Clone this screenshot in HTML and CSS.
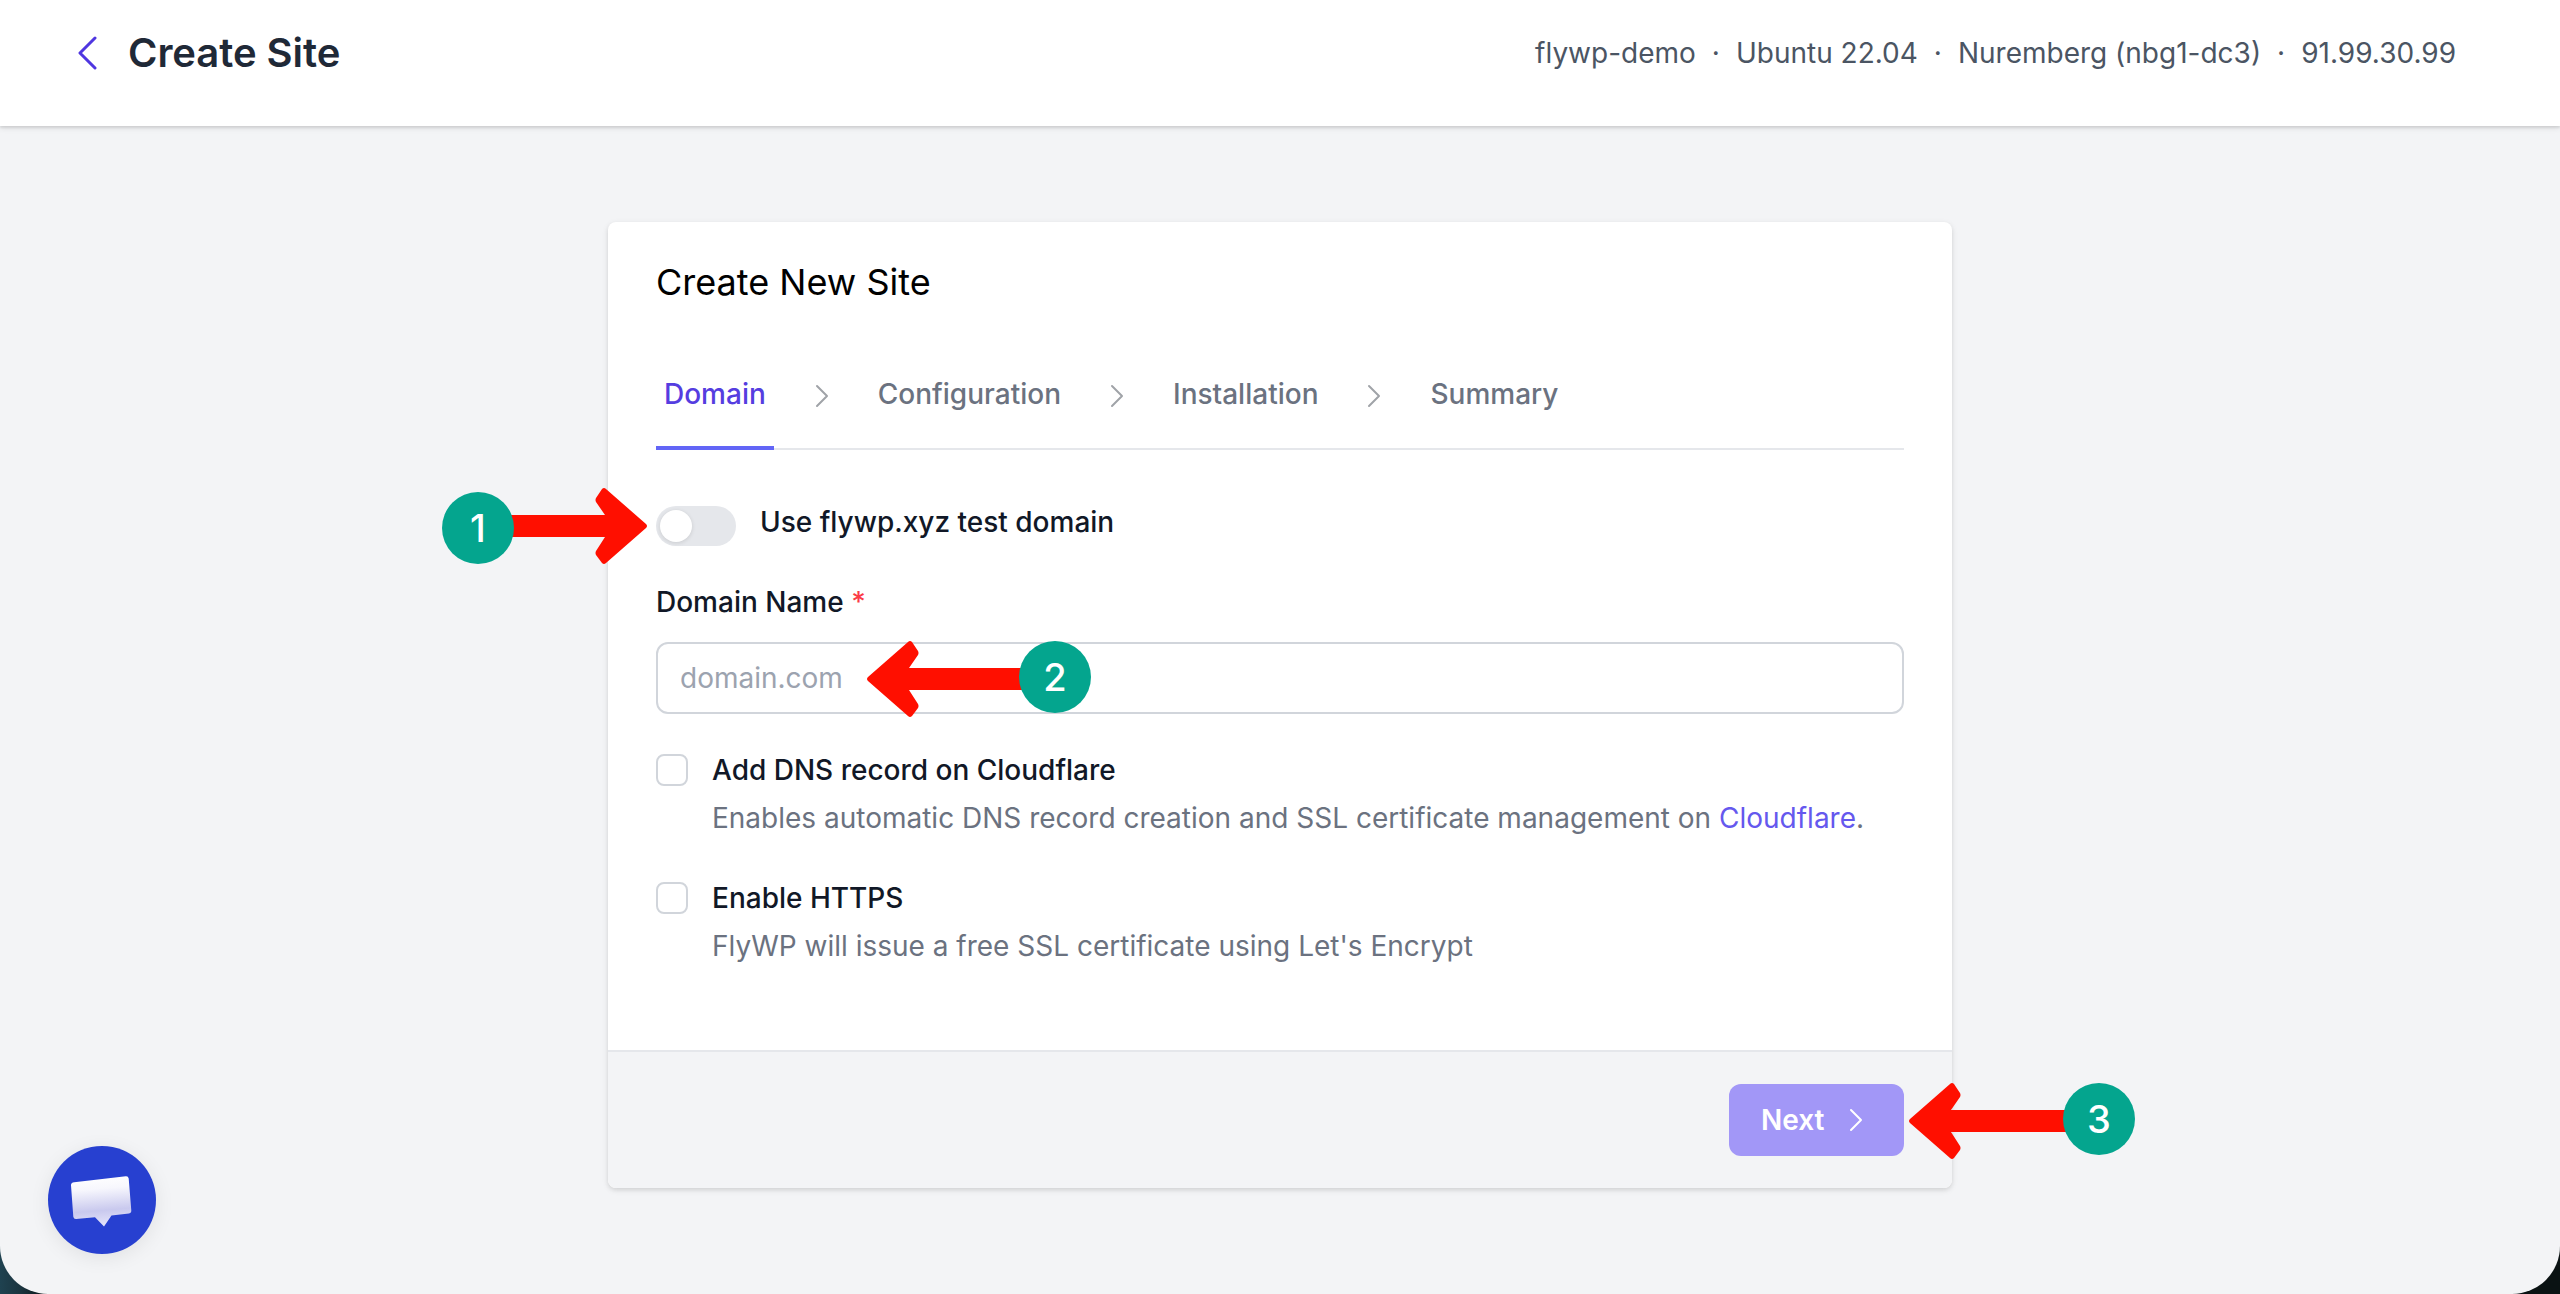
FILE: index.html
```html
<!DOCTYPE html>
<html lang="en">
<head>
<meta charset="utf-8">
<title>Create Site</title>
<link rel="stylesheet" href="styles.css">
</head>
<body>
<div class="window">
  <header class="header">
    <div class="header-left">
      <svg class="back" viewBox="0 0 20 34" width="20" height="34"><path d="M17 2 2 17l15 15"/></svg>
      <h1 class="page-title">Create Site</h1>
    </div>
    <div class="server-meta"><span>flywp-demo</span><span class="dot">·</span><span>Ubuntu 22.04</span><span class="dot">·</span><span>Nuremberg (nbg1-dc3)</span><span class="dot">·</span><span>91.99.30.99</span></div>
  </header>

  <main class="card">
    <div class="card-body">
      <h2 class="card-title">Create New Site</h2>
      <nav class="tabs">
        <span class="tab tab-active">Domain</span>
        <svg class="chevron" viewBox="0 0 14 24" width="14" height="24"><path d="M2 2l10 10L2 22"/></svg>
        <span class="tab">Configuration</span>
        <svg class="chevron" viewBox="0 0 14 24" width="14" height="24"><path d="M2 2l10 10L2 22"/></svg>
        <span class="tab">Installation</span>
        <svg class="chevron" viewBox="0 0 14 24" width="14" height="24"><path d="M2 2l10 10L2 22"/></svg>
        <span class="tab">Summary</span>
      </nav>
      <div class="toggle-row">
        <div class="toggle"><div class="knob"></div></div>
        <span class="label">Use flywp.xyz test domain</span>
      </div>
      <div class="field-label">Domain Name <span class="required">*</span></div>
      <div class="input">domain.com</div>
      <div class="check-row">
        <div class="checkbox"></div>
        <div class="check-text">
          <div class="label">Add DNS record on Cloudflare</div>
          <div class="desc">Enables automatic DNS record creation and SSL certificate management on <a class="link">Cloudflare</a>.</div>
        </div>
      </div>
      <div class="check-row check-row-next">
        <div class="checkbox"></div>
        <div class="check-text">
          <div class="label">Enable HTTPS</div>
          <div class="desc">FlyWP will issue a free SSL certificate using Let's Encrypt</div>
        </div>
      </div>
    </div>
    <footer class="card-footer">
      <div class="button">Next<svg class="chevron-light" viewBox="0 0 14 24" width="14" height="24"><path d="M2 2l10 10L2 22"/></svg></div>
    </footer>
  </main>

  <div class="chat">
    <svg viewBox="0 0 108 108" width="108" height="108">
      <defs>
        <linearGradient id="bubble" x1="0.45" y1="0" x2="0.55" y2="1">
          <stop offset="0" stop-color="#ffffff"/>
          <stop offset="0.25" stop-color="#f7f7fd"/>
          <stop offset="0.68" stop-color="#c9c9ee"/>
          <stop offset="1" stop-color="#e6e6fb"/>
        </linearGradient>
      </defs>
      <path d="M26.200 36.300 77.800 30.200Q80.300 30 80.700 32.500L83.300 64.500Q83.500 67 81 67.400L63.500 69.500 56 80.500 47 71.200 28.200 73Q25.700 73.200 25.300 70.700L23 39.200Q22.900 36.700 26.200 36.300Z" fill="url(#bubble)"/>
    </svg>
  </div>
</div>

<svg class="arrow arrow-1" viewBox="0 0 146 78" width="146" height="78"><path d="M10 28H104L95 15Q94 13 95 11L101 2Q103 0 105 2L145 37Q147 39 145 41L105 76Q103 78 101 76L95 68Q94 66 95 64L104 50H10Z"/></svg>
<svg class="arrow arrow-2" viewBox="0 0 170 78" width="170" height="78"><path d="M165 28H42L51 15Q52 13 51 11L45 2Q43 0 41 2L1 37Q-1 39 1 41L41 76Q43 78 45 76L51 68Q52 66 51 64L42 50H165Z"/></svg>
<svg class="arrow arrow-3" viewBox="0 0 170 78" width="170" height="78"><path d="M165 28H42L51 15Q52 13 51 11L45 2Q43 0 41 2L1 37Q-1 39 1 41L41 76Q43 78 45 76L51 68Q52 66 51 64L42 50H165Z"/></svg>
<div class="badge badge-1">1</div>
<div class="badge badge-2">2</div>
<div class="badge badge-3">3</div>
</body>
</html>
```
FILE: styles.css
```css
* { box-sizing: border-box; }
body {
  margin: 0;
  background: linear-gradient(90deg, #1f4250 0, #1b3540 20px, #0a1213 50px);
  font-family: Inter, "Liberation Sans", sans-serif;
  font-size: 28px;
  color: #111827;
}
.window {
  height: 1294px;
  overflow: hidden;
  background: #f3f4f6;
  border-radius: 0 0 48px 48px;
}

/* Header */
.header {
  display: flex;
  justify-content: space-between;
  align-items: center;
  height: 126px;
  padding: 0 104px 21px 78px;
  background: #fff;
  box-shadow: 0 2px 6px rgba(0, 0, 0, 0.1), 0 2px 2px rgba(0, 0, 0, 0.08);
}
.header-left { display: flex; align-items: center; gap: 30px; }
.back { fill: none; stroke: #4f36e0; stroke-width: 3; stroke-linecap: round; stroke-linejoin: round; }
.page-title { margin: 0; font-size: 40px; font-weight: 600; letter-spacing: -0.05px; color: #1f2937; }
.server-meta { color: #4b5563; }
.dot { margin: 0 16px; }

/* Card */
.card {
  width: 1344px;
  margin: 96px auto 0;
  background: #fff;
  border-radius: 8px;
  box-shadow: 0 2px 6px rgba(0, 0, 0, 0.1), 0 2px 4px rgba(0, 0, 0, 0.06);
}
.card-body { padding: 40px 48px 88px; }
.card-title { margin: 0; font-size: 36px; font-weight: 400; line-height: 40px; color: #000; }

/* Steps */
.tabs {
  display: flex;
  align-items: center;
  gap: 41px;
  margin-top: 32px;
  box-shadow: inset 0 -2px #e5e7eb;
  font-weight: 500;
  color: #6b7280;
}
.tab { padding: 40px 8px 32px; border-bottom: 4px solid transparent; line-height: 40px; }
.tab-active { border-color: #6265f6; color: #553de0; }
.chevron, .chevron-light { fill: none; stroke: #a0a3a8; stroke-width: 2; stroke-linecap: round; stroke-linejoin: round; }
.chevron { margin-top: 8px; }

/* Form */
.toggle-row { display: flex; gap: 24px; margin-top: 56px; }
.toggle { width: 80px; height: 40px; padding: 4px; border-radius: 20px; background: #e5e7eb; }
.knob { width: 32px; height: 32px; border-radius: 50%; background: #fff; box-shadow: 0 1px 4px rgba(0, 0, 0, 0.12); }
.label { font-weight: 500; line-height: 32px; }
.field-label { margin-top: 36px; font-weight: 500; line-height: 40px; }
.required { color: #fb3b46; }
.input {
  height: 72px;
  margin-top: 20px;
  padding: 0 22px;
  border: 2px solid #d1d5db;
  border-radius: 12px;
  line-height: 68px;
  color: #9ca3af;
}
.check-row { display: flex; gap: 24px; margin-top: 40px; }
.check-row-next { margin-top: 48px; }
.checkbox { width: 32px; height: 32px; border: 2px solid #d1d5db; border-radius: 8px; }
.desc { margin-top: 16px; line-height: 32px; color: #6b7280; }
.link { color: #6558ee; }

/* Footer */
.card-footer {
  display: flex;
  justify-content: flex-end;
  padding: 32px 48px;
  border-top: 2px solid #e5e7eb;
  border-radius: 0 0 8px 8px;
  background: #f3f4f6;
}
.button {
  display: flex;
  align-items: center;
  justify-content: space-between;
  width: 175px;
  height: 72px;
  padding: 0 41px 0 32px;
  border-radius: 12px;
  background: #a297f7;
  font-weight: 600;
  color: #fff;
}
.chevron-light { stroke: #fff; }

/* Chat launcher */
.chat {
  position: absolute;
  left: 48px;
  top: 1146px;
  width: 108px;
  height: 108px;
  border-radius: 50%;
  background: #2740d0;
  box-shadow: 0 4px 20px rgba(0, 0, 0, 0.08);
}

/* Step markers */
.arrow { position: absolute; fill: #ff0f00; }
.arrow-1 { left: 501px; top: 487px; }
.arrow-2 { left: 867px; top: 640px; }
.arrow-3 { left: 1909px; top: 1082px; }
.badge {
  position: absolute;
  width: 72px;
  height: 72px;
  border-radius: 50%;
  background: #04a58e;
  font-size: 38px;
  font-weight: 500;
  line-height: 72px;
  text-align: center;
  color: #fff;
}
.badge-1 { left: 442px; top: 492px; }
.badge-2 { left: 1019px; top: 641px; }
.badge-3 { left: 2063px; top: 1083px; }
```
